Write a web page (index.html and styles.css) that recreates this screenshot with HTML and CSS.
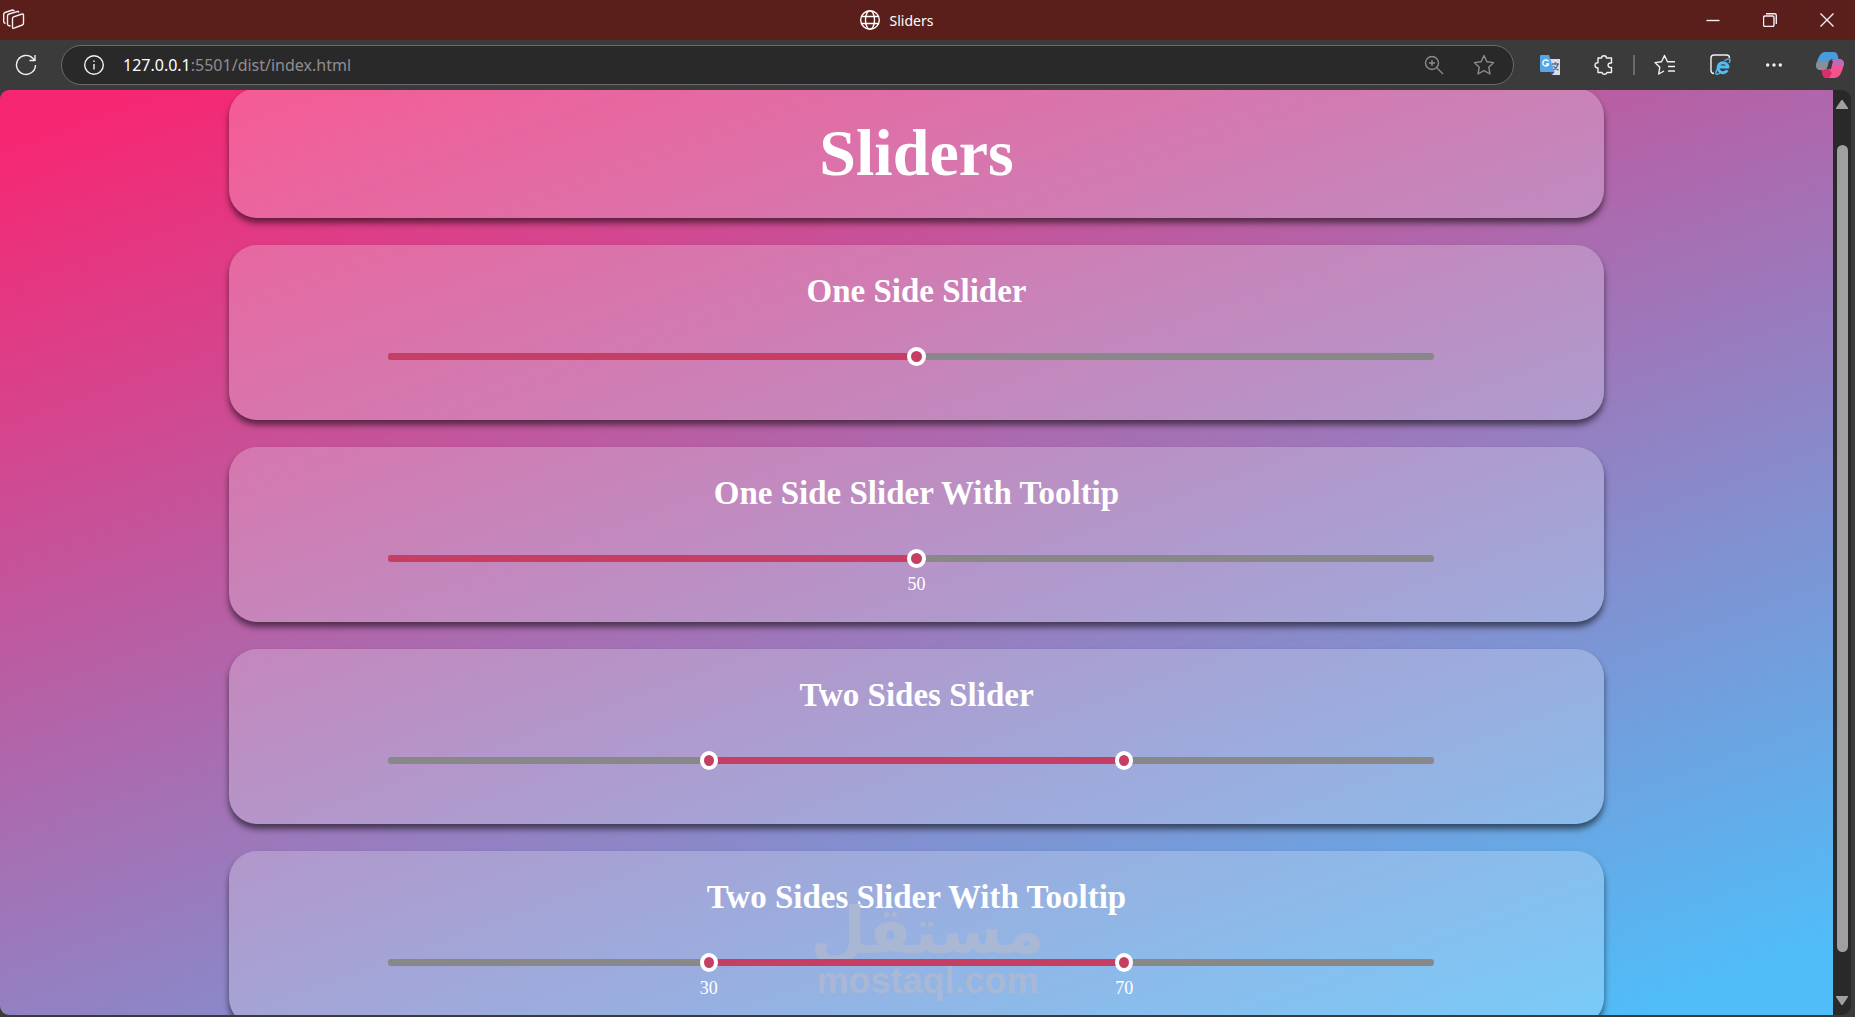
FILE: index.html
```html
<!DOCTYPE html>
<html lang="en">
<head>
<meta charset="UTF-8">
<meta name="viewport" content="width=device-width, initial-scale=1.0">
<title>Sliders</title>
<link rel="stylesheet" href="styles.css">
</head>
<body>

<header class="titlebar">
    <button class="icon-btn workspaces" aria-label="Workspaces">
        <svg width="22" height="22" viewBox="0 0 22 22"><path d="M9.500 18.500V9.500Q9.500 8.300 10.500 7.800L19 5Q20.500 4.700 20.500 6.200V14Q20.500 15.500 19.300 16L11 19.200Q9.500 19.700 9.500 18.500ZM7.500 17L5.500 16.500Q4.500 16 4.500 15V7Q4.500 5.500 6 5L15 2.300L16 3.500M2.500 14.500Q0.700 14 0.700 12.500V5.500Q0.700 4 2 3.500L9.500 1L11.500 1.800"/></svg>
    </button>
    <div class="tab-title">
        <svg width="20" height="20" viewBox="0 0 20 20"><circle cx="10" cy="10" r="9.300"/><ellipse cx="10" cy="10" rx="4.500" ry="9.300"/><path d="M1.500 6.500H18.500M1.500 13.500H18.500"/></svg>
        <span>Sliders</span>
    </div>
    <div class="window-buttons">
        <button class="icon-btn" aria-label="Minimize"><svg width="14" height="14" viewBox="0 0 14 14"><path d="M0.500 7.500H13.500"/></svg></button>
        <button class="icon-btn" aria-label="Restore"><svg width="14" height="14" viewBox="0 0 14 14"><rect x="0.500" y="3" width="10.500" height="10.500" rx="1.500"/><path d="M3 0.800H11.500Q13.300 0.800 13.300 2.500V11"/></svg></button>
        <button class="icon-btn" aria-label="Close"><svg width="14" height="14" viewBox="0 0 14 14"><path d="M0.500 0.500L13.500 13.500M13.500 0.500L0.500 13.500"/></svg></button>
    </div>
</header>

<nav class="toolbar">
    <button class="icon-btn reload" aria-label="Reload">
        <svg width="22" height="22" viewBox="0 0 22 22"><path d="M20.500 11A9.500 9.500 0 1 1 18 4.500L20 6.500M20 1V6.500H14.500"/></svg>
    </button>
    <div class="address-bar">
        <button class="icon-btn" aria-label="Site information">
            <svg width="20" height="20" viewBox="0 0 20 20"><circle cx="10" cy="10" r="9.300"/><path d="M10 9V14.500M10 5.500V7"/></svg>
        </button>
        <div class="url">127.0.0.1<span>:5501/dist/index.html</span></div>
        <button class="icon-btn muted" aria-label="Zoom">
            <svg width="20" height="20" viewBox="0 0 20 20"><circle cx="8" cy="8" r="6.500"/><path d="M13 13L19 19M8 5V11M5 8H11"/></svg>
        </button>
        <button class="icon-btn muted" aria-label="Add to favorites">
            <svg width="22" height="22" viewBox="0 0 22 22"><path d="M11 1.500L13.900 7.700L20.700 8.600L15.700 13.200L17 20L11 16.700L5 20L6.300 13.200L1.300 8.600L8.100 7.700Z"/></svg>
        </button>
    </div>
    <div class="extensions">
        <button class="icon-btn" aria-label="Translate">
            <svg width="20" height="20" viewBox="0 0 20 20" class="filled"><path fill="#dcdbe8" d="M9 4H20V20H12Z"/><path fill="#56a5e8" d="M1 0H9L14.500 17H1Q0 17 0 16V1Q0 0 1 0Z"/><path fill="#4a4590" d="M10 17H14.500L12 20Z"/><path fill="none" stroke="#fff" d="M8.500 6.500A3 3 0 1 0 8.700 9H6"/><path fill="none" stroke="#5f6f8f" d="M12 9H19M15.500 7V9M18 9Q17 13 13.500 15M13.500 11Q15 14 18.500 15"/></svg>
        </button>
        <button class="icon-btn" aria-label="Extensions">
            <svg width="20" height="20" viewBox="0 0 20 20"><path d="M4 3H7.500Q7.500 0.800 10 0.800T12.500 3H17.500V8H16Q14 8.500 14 10.300T16 12.500H17.500V17.500H13Q12.500 19.300 10.500 19.300T8 17.500H4V13Q1 13 1 10.300T4 7.700Z"/></svg>
        </button>
        <span class="divider"></span>
        <button class="icon-btn" aria-label="Favorites">
            <svg width="22" height="22" viewBox="0 0 22 22"><path d="M21 7.700H13.500L10.500 1.500L7.500 7.700L1 8.600L5.800 13.200L4.700 20L10 17M14 12.500H21M14 17H21"/></svg>
        </button>
        <button class="icon-btn" aria-label="Internet Explorer mode">
            <svg width="22" height="22" viewBox="0 0 22 22"><path d="M4 19.500Q1 19.500 1 16.500V4Q1 1 4 1H16.500Q19.500 1 19.500 4"/><path class="ie" d="M8.500 13H18A5 5 0 1 0 17.300 16.300"/><path class="ie-ring" d="M8 14Q4.500 19.500 6.500 20.300Q8 20.500 10 19M14.500 6.500Q19 4 20 5.300Q20.500 6.500 19 9"/></svg>
        </button>
        <button class="icon-btn" aria-label="Settings and more">
            <svg width="16" height="20" viewBox="2 0 16 20" class="filled"><circle cx="3.700" cy="10" r="1.700"/><circle cx="10" cy="10" r="1.700"/><circle cx="16.300" cy="10" r="1.700"/></svg>
        </button>
        <button class="icon-btn" aria-label="Copilot">
            <svg width="28" height="28" viewBox="0 0 28 28" class="filled"><path fill="#4a9bdc" d="M9 1H18Q20.500 1 21.500 4L22.500 8H17Q14 8 13 11L11 17Q10 19 7 19H4Q0 19 0 14Q3 1 9 1Z"/><path fill="#8b9096" d="M1 11H13L11 17Q10 19 7 19H4Q0 18 0 14Z"/><path fill="#f4528f" d="M19 27H10Q7.500 27 6.500 23L5.500 19H8Q11 19 12 17L15 11L17 8H24Q28 9 28 13Q25 27 19 27Z"/><path fill="#b96cbb" d="M17 8H24Q28 9 28 13L27.500 15H14Z"/><path fill="#d92f66" d="M5.500 19H8Q11 19 12 17L16 22L13 27H10Q7.500 27 6.500 23Z"/><path fill="#3b3b3b" d="M13 10H17L15 18H11Z"/></svg>
        </button>
    </div>
</nav>

<div class="viewport">
    <div class="clip">
        <main class="page">
            <section class="card title-card">
                <h1>Sliders</h1>
            </section>

            <section class="card">
                <h2 id="one">One Side Slider</h2>
                <div class="slider">
                    <div class="track"><div class="fill" style="width: 50%"></div></div>
                    <input type="range" min="0" max="100" value="50" aria-labelledby="one">
                </div>
            </section>

            <section class="card">
                <h2 id="one-tip">One Side Slider With Tooltip</h2>
                <div class="slider">
                    <div class="track"><div class="fill" style="width: 50%"></div></div>
                    <input type="range" min="0" max="100" value="50" aria-labelledby="one-tip">
                    <div class="tips"><output style="left: 50%">50</output></div>
                </div>
            </section>

            <section class="card">
                <h2 id="two">Two Sides Slider</h2>
                <div class="slider two-sides">
                    <div class="track"><div class="fill" style="margin-left: 30%; width: 40%"></div></div>
                    <input type="range" min="0" max="100" value="30" aria-labelledby="two">
                    <input type="range" min="0" max="100" value="70" aria-labelledby="two">
                </div>
            </section>

            <section class="card">
                <h2 id="two-tip">Two Sides Slider With Tooltip</h2>
                <div class="slider two-sides">
                    <div class="track"><div class="fill" style="margin-left: 30%; width: 40%"></div></div>
                    <input type="range" min="0" max="100" value="30" aria-labelledby="two-tip">
                    <input type="range" min="0" max="100" value="70" aria-labelledby="two-tip">
                    <div class="tips"><output style="left: 30%">30</output><output style="left: 70%">70</output></div>
                </div>
            </section>
        </main>
    </div>
    <div class="scrollbar">
        <svg width="12" height="9" viewBox="0 0 12 9"><path d="M6 0.500L11.500 8.500H0.500Z"/></svg>
        <div class="scroll-thumb"></div>
        <svg width="12" height="9" viewBox="0 0 12 9"><path d="M6 8.500L11.500 0.500H0.500Z"/></svg>
    </div>
</div>

<div class="watermark">
    <span class="mark" lang="ar">مستقل</span>
    <span class="domain">mostaql.com</span>
</div>

</body>
</html>
```
FILE: styles.css
```css
* {
    box-sizing: border-box;
}
body {
    margin: 0;
    height: 100vh;
    display: flex;
    flex-direction: column;
    overflow: hidden;
    position: relative;
    background-color: #3b3b3b;
    color: #fff;
    font-family: "Liberation Serif", "Times New Roman", serif;
}

/* Browser chrome */
.titlebar, .toolbar {
    display: flex;
    align-items: center;
    flex-shrink: 0;
    font-family: "Noto Sans", sans-serif;
}
.titlebar {
    height: 40px;
    background-color: #5a1f1b;
    justify-content: space-between;
}
.icon-btn {
    display: flex;
    padding: 0;
    border: none;
    background: none;
    color: #f4f0f4;
}
.icon-btn.muted {
    color: #8d8a8d;
}
svg {
    display: block;
    fill: none;
    stroke: currentColor;
    stroke-width: 1.4;
    stroke-linejoin: round;
}
svg.filled {
    fill: currentColor;
    stroke: none;
}
.workspaces {
    width: 108px;
    padding-left: 3px;
}
.tab-title {
    display: flex;
    align-items: center;
    gap: 10px;
    font-size: 14px;
}
.window-buttons {
    display: flex;
    width: 170px;
    gap: 43px;
    padding-left: 21px;
}
.toolbar {
    height: 50px;
    background-color: #3b3b3b;
    padding: 0 10px 0 15px;
}
.reload {
    width: 46px;
}
.address-bar {
    flex: 1;
    display: flex;
    align-items: center;
    height: 40px;
    padding: 0 18px 0 22px;
    border: 1px solid #6d6a6d;
    border-radius: 20px;
    background-color: #292929;
}
.address-bar .muted {
    margin-left: 29px;
}
.url {
    flex: 1;
    margin-left: 19px;
    font-size: 16px;
    line-height: 24px;
}
.url span {
    color: #908d92;
}
.extensions {
    display: flex;
    align-items: center;
    gap: 34px;
    width: 331px;
    padding-left: 26px;
}
.divider {
    width: 2px;
    height: 20px;
    margin: 0 -15px;
    background-color: #6d6a6d;
}
.ie {
    stroke: #52bdf5;
    stroke-width: 3;
}
.ie-ring {
    stroke: #52bdf5;
}

/* Page area */
.viewport {
    flex: 1;
    min-height: 0;
    display: flex;
    padding: 0 4px 2px 0;
}
.clip {
    flex: 1;
    overflow: hidden;
    border-radius: 9px 0 0 9px;
}
.page {
    margin-top: -38px;
    padding: 36px 0;
    display: flex;
    flex-direction: column;
    align-items: center;
    gap: 27px;
    background: linear-gradient(160deg, #f72672 5%, #50bdf8 93%);
}
.card {
    width: 75%;
    height: 175px;
    padding: 27px;
    border-radius: 28px;
    background-color: rgba(255, 255, 255, 0.23);
    box-shadow: 0 5px 6px rgba(0, 0, 0, 0.55);
    display: flex;
    flex-direction: column;
    align-items: center;
}
.title-card {
    height: 130px;
}
h1, h2 {
    margin: 0;
    text-align: center;
}
h1 {
    font-size: 66px;
    line-height: 76px;
}
h2 {
    font-size: 33px;
    line-height: 38px;
}

/* Sliders */
.slider {
    position: relative;
    z-index: 2;
    width: 80%;
    margin-top: 37px;
    display: grid;
    align-items: center;
}
.track, .slider input {
    grid-area: 1 / 1;
}
.track {
    width: 99%;
    height: 7px;
    border-radius: 3px;
    background-color: #888;
}
.fill {
    height: 7px;
    border-radius: 3px;
    background-color: #c73e64;
}
.slider input {
    -webkit-appearance: none;
    appearance: none;
    width: 100%;
    height: 19px;
    margin: 0;
    background: none;
    pointer-events: none;
}
.slider input::-webkit-slider-thumb {
    -webkit-appearance: none;
    appearance: none;
    width: 19px;
    height: 19px;
    border: 4px solid #fff;
    border-radius: 50%;
    background-color: #c73e64;
    pointer-events: auto;
}
.two-sides input::-webkit-slider-thumb {
    width: 18px;
}
.tips {
    position: absolute;
    top: 24px;
    left: 9px;
    right: 9px;
}
.tips output {
    position: absolute;
    transform: translateX(-50%);
    font-size: 18px;
    line-height: 22px;
}

/* Scrollbar */
.scrollbar {
    width: 18px;
    padding: 10px 0;
    display: flex;
    flex-direction: column;
    align-items: center;
    background-color: #292929;
    border-radius: 0 9px 9px 0;
}
.scrollbar path {
    fill: #a0a0a0;
    stroke: #a0a0a0;
}
.scroll-thumb {
    flex: 1;
    width: 11px;
    margin: 36px 0 44px;
    border-radius: 6px;
    background-color: #a0a0a0;
}

/* Watermark */
.watermark {
    position: absolute;
    z-index: 1;
    bottom: 16px;
    left: 0;
    right: 0;
    display: flex;
    flex-direction: column;
    align-items: center;
    color: #aeb9d2;
    opacity: 0.85;
    pointer-events: none;
}
.mark {
    font: bold 64px/60px "DejaVu Sans", sans-serif;
}
.domain {
    font: bold 36px/40px "Liberation Sans", Arial, sans-serif;
}
```
